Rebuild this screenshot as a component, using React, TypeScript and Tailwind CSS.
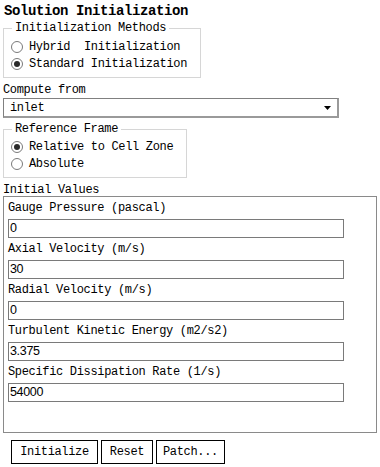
import React from "react";

const mono = { fontFamily: '"Liberation Mono", "DejaVu Sans Mono", monospace' };

function Radio({ checked, label }: { checked?: boolean; label: string }) {
  return (
    <div className="flex items-center h-[17px]">
      <span className="w-[12px] h-[12px] rounded-full border border-[#7a7a7a] bg-white flex items-center justify-center mr-[6px] shrink-0">
        {checked && <span className="w-[6px] h-[6px] rounded-full bg-[#2a2a2a]" />}
      </span>
      <span className="whitespace-pre">{label}</span>
    </div>
  );
}

function Group({ title, w, children }: { title: string; w: string; children: React.ReactNode }) {
  return (
    <div className={`relative ml-[3px] border border-[#d6d6d6] pl-[7px] ${w}`}>
      <span className="absolute left-[8px] top-[-8px] h-[14px] px-[3px] bg-white flex items-center whitespace-pre">{title}</span>
      {children}
    </div>
  );
}

function Field({ label, value }: { label: string; value: string }) {
  return (
    <div className="flex flex-col">
      <div className="h-[22px] flex items-center pl-[4px] whitespace-pre">{label}</div>
      <div
        className="ml-[4px] w-[336px] h-[19px] border border-[#7a7a7a] bg-white flex items-center pl-[1px] text-[12.5px] text-black"
        style={{ fontFamily: '"Liberation Sans", Arial, sans-serif' }}
      >
        {value}
      </div>
    </div>
  );
}

export default function App() {
  return (
    <div className="w-[380px] h-[467px] bg-white text-black text-[12px] tracking-[-0.33px] leading-none overflow-hidden" style={mono}>
      <div className="pl-[4px] h-[21px] flex items-center font-bold text-[14px] tracking-[-0.4px]">Solution Initialization</div>
      <div className="h-[7px]" />
      <Group title="Initialization Methods" w="w-[198px] h-[50px] pt-[9px]">
        <Radio label="Hybrid  Initialization" />
        <Radio checked label="Standard Initialization" />
      </Group>
      <div className="pl-[3px] mt-[5px] h-[14px] flex items-center">Compute from</div>
      <div className="ml-[3px] mt-[1px] w-[336px] h-[20px] border-t border-l border-[#808080] border-r-2 border-b-2 border-r-[#9a9a9a] border-b-[#9a9a9a] flex items-center pl-[6px] relative bg-white">
        <span>inlet</span>
        <svg className="absolute right-[6px] top-[7px]" width="7" height="4" viewBox="0 0 7 4">
          <path d="M0 0 H7 L3.5 4 Z" fill="#000" />
        </svg>
      </div>
      <div className="h-[11px]" />
      <Group title="Reference Frame" w="w-[184px] h-[49px] pt-[8px]">
        <Radio checked label="Relative to Cell Zone" />
        <Radio label="Absolute" />
      </Group>
      <div className="pl-[3px] mt-[5px] h-[13px] flex items-center">Initial Values</div>
      <div className="ml-[3px] w-[374px] h-[237px] border border-[#8a8a8a]">
        <Field label="Gauge Pressure (pascal)" value="0" />
        <Field label="Axial Velocity (m/s)" value="30" />
        <Field label="Radial Velocity (m/s)" value="0" />
        <Field label="Turbulent Kinetic Energy (m2/s2)" value="3.375" />
        <Field label="Specific Dissipation Rate (1/s)" value="54000" />
      </div>
      <div className="flex gap-[3px] ml-[11px] mt-[7px]">
        <button className="h-[24px] w-[87px] border border-black bg-white flex items-center justify-center">Initialize</button>
        <button className="h-[24px] w-[52px] border border-black bg-white flex items-center justify-center">Reset</button>
        <button className="h-[24px] w-[69px] border border-black bg-white flex items-center justify-center">Patch...</button>
      </div>
    </div>
  );
}
